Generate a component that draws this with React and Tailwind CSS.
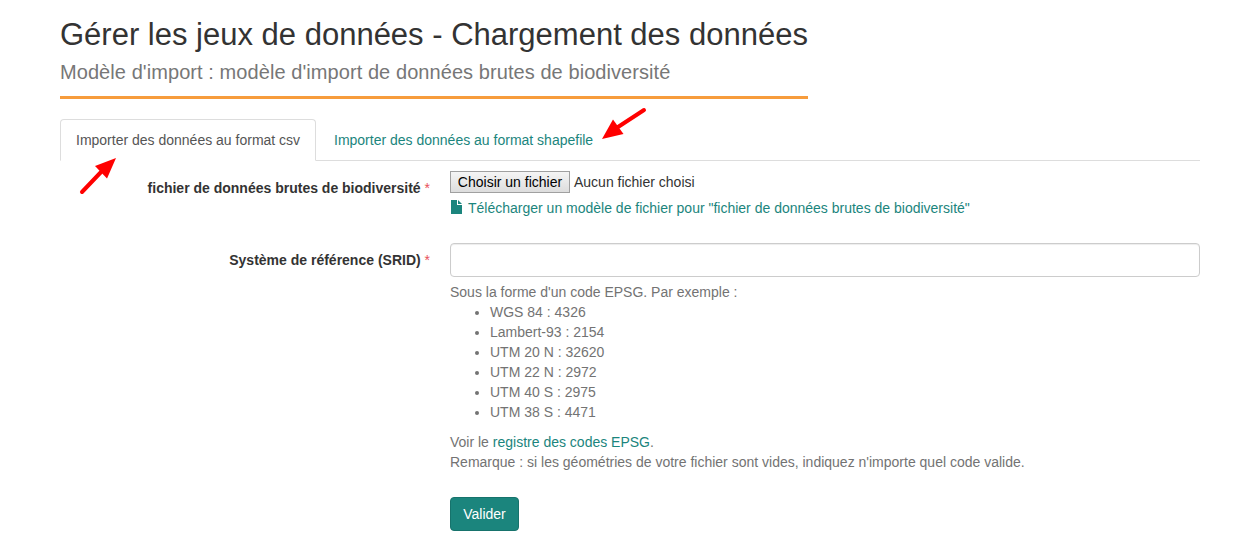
const codes = ["WGS 84 : 4326", "Lambert-93 : 2154", "UTM 20 N : 32620", "UTM 22 N : 2972", "UTM 40 S : 2975", "UTM 38 S : 4471"];

function Label({ children }) {
  return (
    <label className="w-[370px] shrink-0 text-right font-bold text-[#333]">
      {children} <span className="font-normal text-[#e8505b]">*</span>
    </label>
  );
}

export default function App() {
  return (
    <main className="relative h-[547px] w-[1254px] overflow-hidden bg-white pl-[60px] font-['Liberation_Sans',Arial,sans-serif] text-[14px] leading-5 text-[#333]">
      <header className="h-[99px] w-[748px] border-b-3 border-[#f79c3c] pt-[18px]">
        <h1 className="whitespace-nowrap text-[31px] leading-[33px]">Gérer les jeux de données - Chargement des données</h1>
        <p className="mt-[10px] whitespace-nowrap text-[20px] leading-[22px] tracking-[0.07px] text-[#777]">Modèle d'import : modèle d'import de données brutes de biodiversité</p>
      </header>
      <nav className="mt-5 flex h-[42px] w-[1140px] border-b border-[#ddd]">
        <a className="h-[42px] w-[256px] rounded-t border border-[#ddd] border-b-white px-[15px] py-[10px] whitespace-nowrap text-[#555]">Importer des données au format csv</a>
        <a className="ml-[2px] px-4 py-[11px] whitespace-nowrap text-[#1b857d]">Importer des données au format shapefile</a>
      </nav>
      <form className="w-[1140px]">
        <div className="flex h-[82px] gap-5 pt-[10px]">
          <div className="flex pt-[7px]"><Label>fichier de données brutes de biodiversité</Label></div>
          <div>
            <div className="flex items-center">
              <button type="button" className="h-[22px] w-[120px] border border-[#a0a0a0] bg-linear-to-b from-[#f5f5f5] to-[#dddddd] whitespace-nowrap text-black">Choisir un fichier</button>
              <span className="ml-1">Aucun fichier choisi</span>
            </div>
            <a className="mt-[5px] flex text-[#1b857d]">
              <svg width="12" height="14" viewBox="0 0 12 14" className="mt-[2px] mr-[6px]" fill="currentColor"><path d="M1 0H7V5H12V14H1zM8 0L12 4H8z" /></svg>
              Télécharger un modèle de fichier pour "fichier de données brutes de biodiversité"
            </a>
          </div>
        </div>
        <div className="flex gap-5">
          <div className="flex pt-[7px]"><Label>Système de référence (SRID)</Label></div>
          <div className="w-[750px]">
            <input aria-label="Système de référence" className="block h-[34px] w-full rounded border border-[#ccc] px-3 shadow-[inset_0_1px_1px_rgba(0,0,0,0.075)]" />
            <div className="pt-[5px] text-[#737373]">
              <p>Sous la forme d'un code EPSG. Par exemple :</p>
              <ul className="mb-[10px] list-disc pl-10">{codes.map((code) => <li key={code}>{code}</li>)}</ul>
              <p>Voir le <a className="text-[#1b857d]">registre des codes EPSG</a>.</p>
              <p>Remarque : si les géométries de votre fichier sont vides, indiquez n'importe quel code valide.</p>
            </div>
            <button type="button" className="mt-[25px] h-[34px] w-[69px] rounded border border-[#17736c] bg-[#1b857d] text-white">Valider</button>
          </div>
        </div>
      </form>
      <svg className="pointer-events-none absolute top-0 left-0" width="1254" height="220" fill="red" stroke="red">
        <path d="M82 192L102 171" strokeWidth="4" strokeLinecap="round" /><path d="M116 158L107 178.5L95 166z" stroke="none" />
        <path d="M644 110L618 127" strokeWidth="4" strokeLinecap="round" /><path d="M602 139L613 119.5L623.5 134z" stroke="none" />
      </svg>
    </main>
  );
}
